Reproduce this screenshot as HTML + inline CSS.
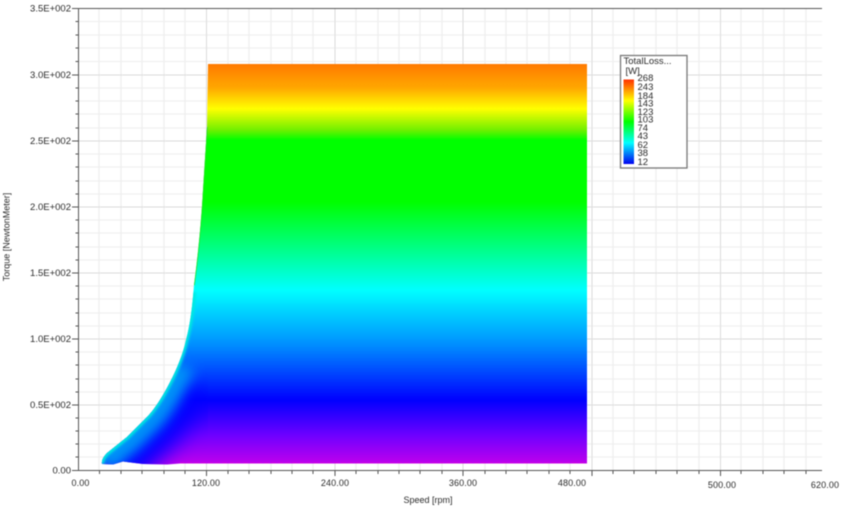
<!DOCTYPE html>
<html><head><meta charset="utf-8"><title>Total Loss Map</title>
<style>
html,body{margin:0;padding:0;background:#fff;width:844px;height:508px;overflow:hidden}
svg{display:block;filter:blur(.4px)}
text{font-family:"Liberation Sans",sans-serif;font-size:9px;fill:#2a2a2a}
.y{text-anchor:end;font-size:9.5px}
.x{text-anchor:middle;letter-spacing:.1px}
.l{font-size:9.5px;fill:#2a2a2a}
</style></head><body>
<svg width="844" height="508" viewBox="0 0 844 508" xmlns="http://www.w3.org/2000/svg">
<defs>
<linearGradient id="main" gradientUnits="userSpaceOnUse" x1="0" y1="64" x2="0" y2="464">
<stop offset="0" stop-color="#ff7a00"/>
<stop offset=".06" stop-color="#ffa800"/>
<stop offset=".112" stop-color="#ffff00"/>
<stop offset=".165" stop-color="#70f000"/>
<stop offset=".19" stop-color="#00ff00"/>
<stop offset=".345" stop-color="#00ff00"/>
<stop offset=".48" stop-color="#00ff9c"/>
<stop offset=".565" stop-color="#00ffff"/>
<stop offset=".7" stop-color="#0090ff"/>
<stop offset=".84" stop-color="#0000ff"/>
<stop offset=".93" stop-color="#7000ff"/>
<stop offset="1" stop-color="#c000ec"/>
</linearGradient>
<linearGradient id="bar" x1="0" y1="0" x2="0" y2="1">
<stop offset="0" stop-color="#ff3000"/>
<stop offset=".25" stop-color="#ffff00"/>
<stop offset=".5" stop-color="#00ff00"/>
<stop offset=".75" stop-color="#00ffff"/>
<stop offset="1" stop-color="#0000f0"/>
</linearGradient>
<filter id="b1" x="-50%" y="-50%" width="200%" height="200%"><feGaussianBlur stdDeviation="11"/></filter>
<filter id="b2" x="-50%" y="-50%" width="200%" height="200%"><feGaussianBlur stdDeviation="6"/></filter>
<filter id="b3" x="-50%" y="-50%" width="200%" height="200%"><feGaussianBlur stdDeviation="1.2"/></filter>
<path id="sh" d="M208 64H587V463.500H180L167 464.500 143 464 123 461.500 113 464.500 102 464Q101 459 107 453L127 437 147 417C152 412 157 405 163 395 174 376 182 358 186 340 190 325 192 310 194 285 198 255 201 225 203 190L207 127Z"/>
<clipPath id="c"><use href="#sh"/></clipPath>
</defs>

<!-- minor grid -->
<path fill="none" stroke="#efefef" stroke-width="1.4" d="M99 8V470M121 8V470M142 8V470M164 8V470M185 8V470M228 8V470M249 8V470M271 8V470M292 8V470M313 8V470M356 8V470M378 8V470M399 8V470M420 8V470M442 8V470M485 8V470M506 8V470M527 8V470M549 8V470M570 8V470M613 8V470M634 8V470M656 8V470M677 8V470M699 8V470M741 8V470M763 8V470M784 8V470M806 8V470"/>
<path fill="none" stroke="#f0f0f0" stroke-width="1.3" d="M78 21.5H822M78 35H822M78 48H822M78 61.5H822M78 88H822M78 101H822M78 114H822M78 128H822M78 154H822M78 167H822M78 181H822M78 194H822M78 220H822M78 233H822M78 247H822M78 260H822M78 286H822M78 299H822M78 313H822M78 326H822M78 352H822M78 365H822M78 379H822M78 392H822M78 418H822M78 431H822M78 444H822M78 457H822"/>
<!-- major grid -->
<path fill="none" stroke="#dcdcdc" stroke-width="1" d="M206.5 8V470M335 8V470M463 8V470M592 8V470M720.5 8V470M78 75H822M78 141H822M78 207H822M78 273H822M78 339H822M78 405H822"/>

<!-- contour fill -->
<use href="#sh" fill="url(#main)"/>
<g clip-path="url(#c)">
<path fill="none" stroke="#0000ff" stroke-width="78" filter="url(#b1)" d="M100 466 127 437 147 417 163 395 172 380"/>
<path fill="none" stroke="#0092f8" stroke-width="34" filter="url(#b2)" d="M102 464 107 453 127 437 147 417C152 412 157 405 163 395 170 383 175 373 179 363"/>
<path fill="none" stroke="#00eadf" stroke-width="5" filter="url(#b3)" d="M102 464Q101 459 107 453L127 437 147 417C152 412 157 405 163 395 174 376 182 358 186 340 190 325 192 310 193.500 292"/>
<path fill="none" stroke="#20e020" stroke-width="1.500" d="M194 285C198 255 201 225 203 190L207 127"/>
<path fill="none" stroke="#c800e0" stroke-width="1.600" stroke-dasharray="5 2" d="M180 463H587"/>
</g>

<!-- axes -->
<path fill="none" stroke="#555" stroke-width="1" d="M78.500 8V471M78 8.500H822M78 470.500H822"/>
<path fill="none" stroke="#555" stroke-width="1" d="M72 8.500H78M72 75H78M72 141H78M72 207H78M72 273H78M72 339H78M72 405H78M72 470.500H78M75.500 21.500H78M75.500 35H78M75.500 48H78M75.500 61.500H78M75.500 88H78M75.500 101H78M75.500 114H78M75.500 128H78M75.500 154H78M75.500 167H78M75.500 181H78M75.500 194H78M75.500 220H78M75.500 233H78M75.500 247H78M75.500 260H78M75.500 286H78M75.500 299H78M75.500 313H78M75.500 326H78M75.500 352H78M75.500 365H78M75.500 379H78M75.500 392H78M75.500 418H78M75.500 431H78M75.500 444H78M75.500 457H78"/>
<path fill="none" stroke="#555" stroke-width="1" d="M99.500 470V474M121 470V474M142 470V474M164 470V474M185 470V474M206.500 470V476M228 470V474M249 470V474M271 470V474M292 470V474M313 470V474M335 470V476M356 470V474M378 470V474M399 470V474M420 470V474M442 470V474M463 470V476M485 470V474M506 470V474M527 470V474M549 470V474M570 470V474M592 470V476M613 470V474M634 470V474M656 470V474M677 470V474M699 470V474M720.500 470V476M741 470V474M763 470V474M784 470V474M806 470V474"/>

<!-- y labels -->
<text class="y" x="71" y="11.500">3.5E+002</text>
<text class="y" x="71" y="78">3.0E+002</text>
<text class="y" x="71" y="144">2.5E+002</text>
<text class="y" x="71" y="210">2.0E+002</text>
<text class="y" x="71" y="276">1.5E+002</text>
<text class="y" x="71" y="342">1.0E+002</text>
<text class="y" x="71" y="408">0.5E+002</text>
<text class="y" x="71" y="473.500">0.00</text>

<!-- x labels -->
<text class="x" x="80.500" y="486">0.00</text>
<text class="x" x="206" y="486">120.00</text>
<text class="x" x="335" y="486">240.00</text>
<text class="x" x="463" y="486">360.00</text>
<text class="x" x="572" y="486">480.00</text>
<text class="x" x="722" y="488">500.00</text>
<text class="x" x="825" y="488">620.00</text>

<text x="428" y="503" text-anchor="middle">Speed [rpm]</text>
<text transform="translate(9.500 237) rotate(-90)" text-anchor="middle">Torque [NewtonMeter]</text>

<!-- legend -->
<rect x="620.500" y="55.500" width="66.500" height="112.500" fill="#fff" stroke="#777" stroke-width="1.300"/>
<rect x="623.500" y="79.500" width="10.500" height="84.500" fill="url(#bar)"/>
<text class="l" x="623.500" y="64">TotalLoss...</text>
<text class="l" x="625.500" y="74">[W]</text>
<text class="l" x="637.500" y="81">268</text>
<text class="l" x="637.500" y="90">243</text>
<text class="l" x="637.500" y="99">184</text>
<text class="l" x="637.500" y="106.500">143</text>
<text class="l" x="637.500" y="115">123</text>
<text class="l" x="637.500" y="122.500">103</text>
<text class="l" x="637.500" y="131">74</text>
<text class="l" x="637.500" y="139">43</text>
<text class="l" x="637.500" y="148">62</text>
<text class="l" x="637.500" y="156">38</text>
<text class="l" x="637.500" y="165">12</text>
</svg>
</body></html>
